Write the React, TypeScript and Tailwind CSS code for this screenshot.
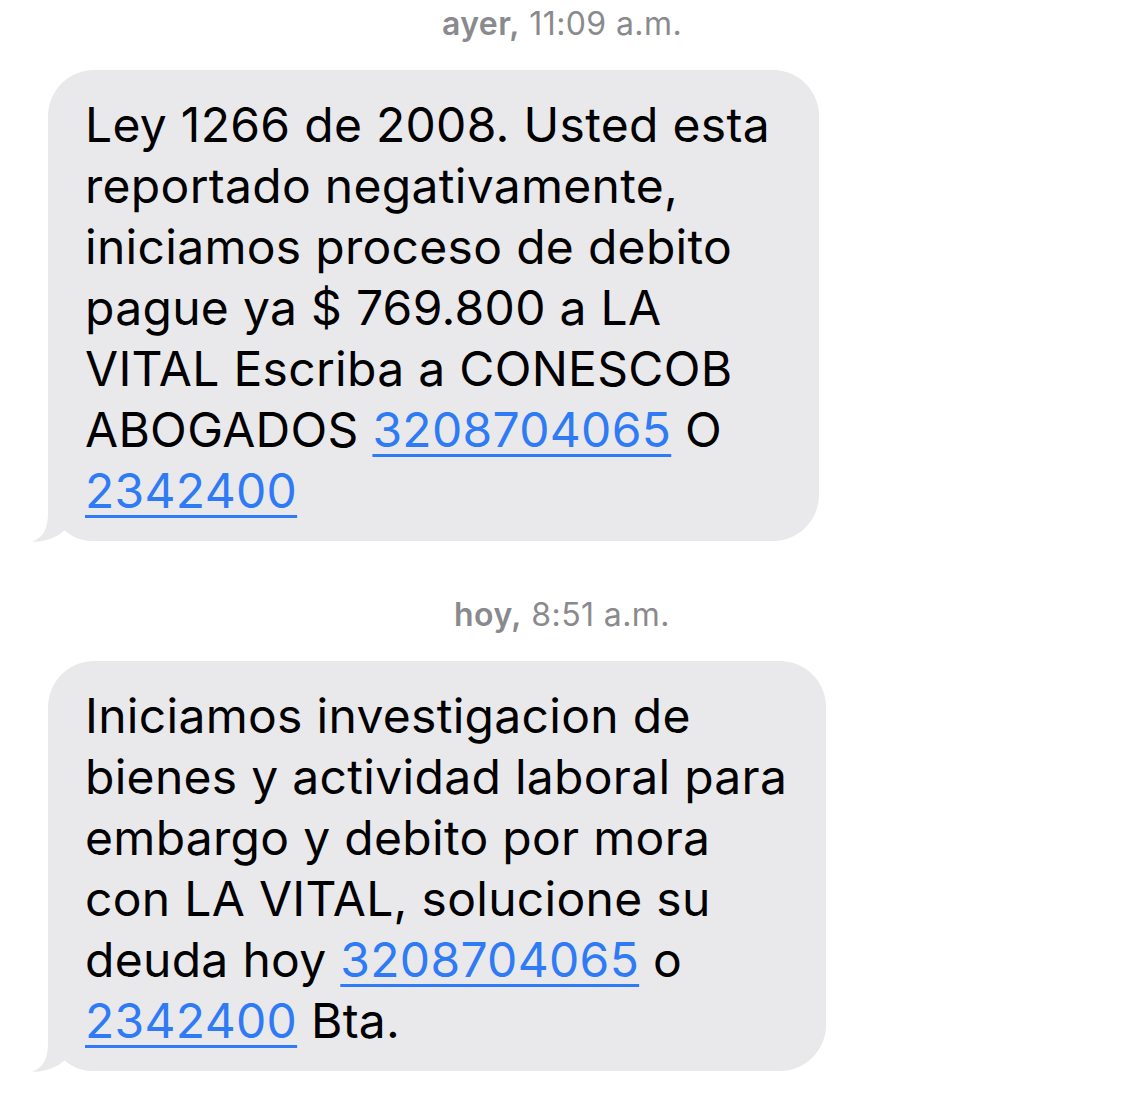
import type { ReactNode } from 'react';

type Message = {
  stamp: string;
  when: string;
  lines: ReactNode[];
  width: string;
};

const Phone = ({ n }: { n: string }) => (
  <a className="text-[#2f7bf5] underline decoration-[3px] underline-offset-[7px]" href={`tel:${n}`}>
    {n}
  </a>
);

const messages: Message[] = [
  {
    stamp: 'ayer,',
    when: '11:09 a.m.',
    width: 'w-[771px]',
    lines: [
      'Ley 1266 de 2008. Usted esta',
      'reportado negativamente,',
      'iniciamos proceso de debito',
      'pague ya $ 769.800 a LA',
      'VITAL Escriba a CONESCOB',
      <>
        ABOGADOS <Phone n="3208704065" /> O
      </>,
      <Phone n="2342400" />,
    ],
  },
  {
    stamp: 'hoy,',
    when: '8:51 a.m.',
    width: 'w-[778px]',
    lines: [
      'Iniciamos investigacion de',
      'bienes y actividad laboral para',
      'embargo y debito por mora',
      'con LA VITAL, solucione su',
      <>
        deuda hoy <Phone n="3208704065" /> o
      </>,
      <>
        <Phone n="2342400" /> Bta.
      </>,
    ],
  },
];

// little hook in the lower-left corner of a received bubble
const Tail = () => (
  <svg className="absolute -bottom-px -left-[16px] h-[51px] w-[66px]" viewBox="-16 -50 66 51">
    <path d="M0 -50 L0 -28 C0 -12 -5 -3 -16 0.5 C-4 1.5 8 -3 17 -11 C25 -3 33 0 50 0 L50 -50 Z" fill="#e9e9eb" />
  </svg>
);

const Bubble = ({ m }: { m: Message }) => (
  <div className={`relative ${m.width} rounded-[46px] bg-[#e9e9eb] pl-[37px] pr-6 pb-[20px] pt-[24px]`}>
    <Tail />
    <div className="relative text-[48px] leading-[61px] tracking-[0.3px] text-black">
      {m.lines.map((l, i) => (
        <div key={i} className="whitespace-nowrap">
          {l}
        </div>
      ))}
    </div>
  </div>
);

export default function App() {
  return (
    <div
      className="min-h-[1100px] w-[1125px] bg-white pl-[48px]"
      style={{ fontFamily: 'Inter, "Noto Sans", sans-serif' }}
    >
      {messages.map((m, i) => (
        <div key={i} className={i === 0 ? 'pt-[4px]' : 'pt-[54px]'}>
          <div className="mb-[26px] w-[1028px] text-center text-[32px] leading-[40px] tracking-[0.4px] text-[#8a8a8e]">
            <span className="font-semibold">{m.stamp}</span> {m.when}
          </div>
          <Bubble m={m} />
        </div>
      ))}
    </div>
  );
}
